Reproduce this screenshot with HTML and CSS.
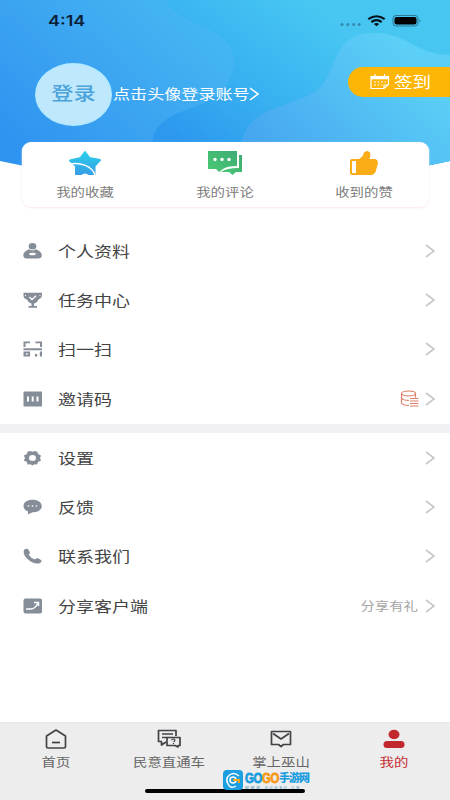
FILE: index.html
```html
<!DOCTYPE html>
<html lang="zh-CN">
<head>
<meta charset="utf-8">
<title>我的</title>
<link rel="stylesheet" href="styles.css">
</head>
<body>
<div class="app">
  <header class="hero">
    <svg class="hero-bg" viewBox="0 0 450 180" width="450" height="180">
      <defs>
        <linearGradient id="sky" gradientUnits="userSpaceOnUse" x1="40" y1="170" x2="190" y2="0"><stop offset="0" stop-color="#2f93f0"/><stop offset=".5" stop-color="#3ca5f1"/><stop offset="1" stop-color="#45b8f2"/></linearGradient>
        <linearGradient id="band" gradientUnits="userSpaceOnUse" x1="190" y1="150" x2="300" y2="0"><stop offset="0" stop-color="#2c98ee"/><stop offset=".5" stop-color="#39b2f1"/><stop offset="1" stop-color="#47c6f2"/></linearGradient>
        <linearGradient id="wave" gradientUnits="userSpaceOnUse" x1="270" y1="160" x2="390" y2="40"><stop offset="0" stop-color="#46a6f0"/><stop offset="1" stop-color="#5bcff6"/></linearGradient>
        <clipPath id="edge"><path d="M0 0H450V161Q225 211 0 161Z"/></clipPath>
      </defs>
      <g clip-path="url(#edge)">
        <path fill="url(#sky)" d="M0 0H450V180H0Z"/>
        <path fill="url(#band)" d="M165 0C175 20 199 22 215 33C232 43 237 58 232 72C226 89 220 96 204 103C184 112 154 116 152 144V180H450V0Z"/>
        <path fill="url(#wave)" d="M240 150C244 115 270 110 295 101C316 93 323 89 332 67C341 43 350 34 370 33C406 31 414 54 450 55V180H240Z"/>
      </g>
    </svg>
    <div class="status">
      <span class="time">4:14</span>
      <svg class="signals" width="84" height="16" viewBox="0 0 84 16">
        <g fill="#3489af"><circle cx="3" cy="12.500" r="1.500"/><circle cx="8.800" cy="12.500" r="1.500"/><circle cx="14.600" cy="12.500" r="1.500"/><circle cx="20.200" cy="12.500" r="1.500"/></g>
        <g fill="none" stroke="#06131c" stroke-width="2.200"><path d="M29.300 7.200Q37.500 1.300 45.700 7.200"/><path d="M32.300 10Q37.500 6.300 42.700 10"/></g><path fill="#06131c" d="M34.800 12Q37.500 10.200 40.200 12L37.500 14.300Z"/>
        <rect x="54" y="3.500" width="25" height="10.500" rx="3" fill="none" stroke="#2c7796"/><rect x="55.500" y="5" width="22" height="7.500" rx="2"/><path fill="#2c7796" d="M80.500 7Q82.500 8.500 80.500 10.500Z"/>
      </svg>
    </div>
    <div class="profile">
      <div class="avatar"><span class="wide">登录</span></div>
      <div class="hint"><span class="wide">点击头像登录账号</span></div>
      <svg class="hint-arrow" width="10" height="14" viewBox="0 0 10 14"><path d="M1 1L9 7L1 13" fill="none" stroke="#fff" stroke-width="1.500"/></svg>
      <div class="sign">
        <svg width="20" height="16" viewBox="0 0 20 16" fill="none" stroke="#fff" stroke-width="1.200"><path d="M1 2.500H18.500V10.500L14 14.500H1Z"/><path d="M1 4H18.500" stroke-width="2.600"/><path d="M5 0V3M14.500 0V3"/><path d="M4 8H16M4 11H12" stroke-dasharray="2 1.500"/><path d="M14 14V11H18"/></svg>
        <span class="wide">签到</span>
      </div>
    </div>
    <div class="card">
      <div class="stat">
        <svg width="34" height="26" viewBox="0 0 34 26"><defs><linearGradient id="st" gradientUnits="userSpaceOnUse" x1="0" y1="0" x2="0" y2="26"><stop offset="0" stop-color="#29d3e9"/><stop offset="1" stop-color="#389be8"/></linearGradient></defs><path fill="url(#st)" stroke="url(#st)" stroke-width="2" stroke-linejoin="round" d="M17 2L21.500 8L32 10L26.500 16V24H8V16L2 10.500L12.500 8Z"/><path d="M1 14C13 12 24 16 27 25" fill="none" stroke="#fff" stroke-width="1.500"/><path d="M12 26Q17 21 22 26Z" fill="#fff"/></svg>
        <span class="wide">我的收藏</span>
      </div>
      <div class="stat">
        <svg width="36" height="26" viewBox="0 0 36 26"><defs><linearGradient id="cm" x1="0" y1="1" x2="1" y2="0"><stop offset="0" stop-color="#4bca75"/><stop offset="1" stop-color="#3dac74"/></linearGradient></defs><g fill="url(#cm)"><path d="M1 1H30V16Q20 16 16 19L12 22L9 19H1Z"/><path d="M32 5H35V22H29L25.500 25L22 22H14Q19 18 32 18Z"/></g><g fill="#fff"><circle cx="8" cy="9.500" r="1.700"/><circle cx="15" cy="9.500" r="1.700"/><circle cx="22" cy="9.500" r="1.700"/></g></svg>
        <span class="wide">我的评论</span>
      </div>
      <div class="stat">
        <svg width="30" height="26" viewBox="0 0 30 26"><path fill="#fbad18" d="M3 9H10Q14 7 15 2.500Q18-.5 21 2.500Q22 5 20.500 9H26Q29.500 10 28.800 14L26.500 22Q25 25 22 25H3Q1 25 1 23V11Q1 9 3 9Z"/><path fill="#fff" d="M3 11H7V23H3Z"/></svg>
        <span class="wide">收到的赞</span>
      </div>
    </div>
  </header>

  <main>
    <ul class="menu">
      <li><svg class="ico" viewBox="0 0 20 16"><ellipse cx="9.500" cy="3.300" rx="3.800" ry="3.200"/><path d="M6 6.300Q9.500 8.500 13 6.300Q18.800 9 18.800 12Q18.800 15.500 15 15.500H4Q.3 15.500 .3 12Q.3 9 6 6.300Z"/><ellipse cx="9.500" cy="11" rx="3.300" ry="1.300" fill="#fff"/></svg><span class="wide">个人资料</span><svg class="chev" viewBox="0 0 10 14"><path d="M1 1L9 7L1 13"/></svg></li>
      <li><svg class="ico" viewBox="0 0 20 16"><path d="M.5 .8H19V4Q18 7 15.500 7.500Q14 11 11 11.500V14H14V15.700H5.500V14H8.500V11.500Q5.500 11 4 7.500Q1 7 .5 4Z"/><path d="M6.500 5L9 7.500L13 3.800" fill="none" stroke="#fff" stroke-width="1.300"/><path d="M2 3.500H3M17.500 3.500H16.500" stroke="#fff" stroke-width="1.200" fill="none"/></svg><span class="wide">任务中心</span><svg class="chev" viewBox="0 0 10 14"><path d="M1 1L9 7L1 13"/></svg></li>
      <li><svg class="ico" viewBox="0 0 20 16"><path d="M.5 .5H7V2.300H2.500V6H.5ZM12.500 .5H19V6H17V2.300H12.500ZM.5 7.300H19V9.200H.5ZM.5 10.500H7V15.500H.5ZM12 13H14.200V15.500H12ZM16.800 10.500H19V15.500H16.800Z"/><path d="M3 12.200H4.700V13.800H3Z" fill="#fff"/></svg><span class="wide">扫一扫</span><svg class="chev" viewBox="0 0 10 14"><path d="M1 1L9 7L1 13"/></svg></li>
      <li><svg class="ico" viewBox="0 0 20 16"><rect x=".5" y=".5" width="18.500" height="15" rx=".7"/><path d="M4 5.500H6V10.500H4ZM8.700 5.500H10.700V10.500H8.700ZM13.500 5.500H15.500V10.500H13.500Z" fill="#fff"/></svg><span class="wide">邀请码</span><svg class="coins" viewBox="0 0 20 18" width="20" height="18"><ellipse cx="8.500" cy="3.500" rx="7" ry="2.500"/><path d="M1.500 3.500V13Q3 15.500 9 15.500M1.500 8Q3 10.500 9 10.500M15.500 3.500V7.500M10 8.500H18.500M10 11H18.500M10 13.500H18.500M10 16H18.500"/></svg><svg class="chev" viewBox="0 0 10 14"><path d="M1 1L9 7L1 13"/></svg></li>
    </ul>
    <div class="gap"></div>
    <ul class="menu">
      <li><svg class="ico" viewBox="0 0 20 16"><path d="M7 1L9.500 1.700L12 1L14.500 2L15 4L18 5.500L17 8L18 10.500L15 12L14 14.500L11.500 14.300L9.500 15.500L7.500 14.300L4.500 14.500L4 12L.8 10.500L2 8L.8 5.500L4 4L4.500 1.800Z"/><ellipse cx="9.500" cy="8" rx="3.500" ry="3" fill="#fff"/></svg><span class="wide">设置</span><svg class="chev" viewBox="0 0 10 14"><path d="M1 1L9 7L1 13"/></svg></li>
      <li><svg class="ico" viewBox="0 0 20 16"><path d="M9.500 .7C14.500 .7 18.800 3 18.800 7S14.500 13.300 9.500 13.300L5 15.500V12.500Q.5 11 .5 7C.5 3 4.500 .7 9.500 .7Z"/><g fill="#dce0e5"><circle cx="5.500" cy="7" r=".9"/><circle cx="9.500" cy="7" r=".9"/><circle cx="13.500" cy="7" r=".9"/></g></svg><span class="wide">反馈</span><svg class="chev" viewBox="0 0 10 14"><path d="M1 1L9 7L1 13"/></svg></li>
      <li><svg class="ico" viewBox="0 0 20 16"><path d="M1 2Q3 0 5 1L7 4.500Q7 6 5.500 6.500Q7.500 10 12 11.500L14 10Q16 10 18.500 12.500Q19 14 16.500 15.200Q11 16.500 5 11.500Q-.5 6.500 1 2Z"/></svg><span class="wide">联系我们</span><svg class="chev" viewBox="0 0 10 14"><path d="M1 1L9 7L1 13"/></svg></li>
      <li><svg class="ico" viewBox="0 0 20 16"><rect x=".5" y=".5" width="18.500" height="15" rx="2"/><path d="M3 11H8Q12 11 15 5M11 4.500H15.500V8" fill="none" stroke="#fff" stroke-width="1.500"/></svg><span class="wide">分享客户端</span><span class="note">分享有礼</span><svg class="chev" viewBox="0 0 10 14"><path d="M1 1L9 7L1 13"/></svg></li>
    </ul>
  </main>

  <nav class="tabs">
    <div class="tab"><svg width="24" height="22" viewBox="0 0 24 22"><path d="M12 2L21.500 8V18.500Q21.500 20 20 20H4Q2.500 20 2.500 18.500V8Z"/><path d="M8 14.500H16"/></svg><span class="wide">首页</span></div>
    <div class="tab"><svg width="26" height="22" viewBox="0 0 26 22"><path d="M10 14L5.500 17V13.500H2.500V2.500H20V8M6 6H17M6 9.500H11"/><path d="M11 9.500H24V17.500H22V19L19 17.500H11Z"/><path d="M15.500 12Q17.500 10 19 12Q19 13 17.500 14M17.500 15V16" stroke-width="1.200"/></svg><span class="wide">民意直通车</span></div>
    <div class="tab"><svg width="24" height="22" viewBox="0 0 24 22"><path d="M2.500 3.500H21.500V16.500H14.500L12 18.500L9.500 16.500H2.500Z"/><path d="M4 5.500L12 11L20 5.500"/></svg><span class="wide">掌上巫山</span></div>
    <div class="tab active"><svg width="24" height="22" viewBox="0 0 24 22"><ellipse cx="12" cy="6.500" rx="5.500" ry="4.700"/><rect x="1.500" y="13" width="21" height="7" rx="3.500"/></svg><span class="wide">我的</span></div>
    <div class="home-bar"></div>
    <div class="mark">
      <svg width="20" height="20" viewBox="0 0 20 20"><rect width="20" height="20" rx="4" fill="#1b9fe0"/><path d="M16 6Q11 1.500 6.500 5T5 14T13 16" fill="none" stroke="#fff" stroke-width="1.500"/><circle cx="10" cy="10" r="3" fill="none" stroke="#fff" stroke-width="1.500"/><path d="M10 10H16V13" fill="none" stroke="#f7a51b" stroke-width="2"/></svg>
      <div class="mark-text"><div class="mark-name"><b>GO</b><b class="or">GO</b><i>手游网</i></div><div class="mark-url">WWW.GOGSO.CN</div></div>
    </div>
  </nav>
</div>
</body>
</html>
```
FILE: styles.css
```css
* { box-sizing: border-box; }
body { margin: 0; font-family: "Liberation Sans", "Noto Sans CJK SC", sans-serif; background: #fff; }
svg { display: block; flex: none; }
.app { width: 450px; height: 800px; display: flex; flex-direction: column; overflow: hidden; }
.wide { display: inline-block; transform: scaleX(1.2); transform-origin: center; white-space: nowrap; }

.hero { position: relative; height: 226px; flex: none; }
.hero-bg { position: absolute; left: 0; top: 0; }
.status { position: relative; height: 42px; padding: 0 30px 0 48px; display: flex; align-items: center; justify-content: space-between; }
.time { font: 600 15px/42px Inter, sans-serif; color: #0b2038; transform: scaleX(1.2); transform-origin: left; }
.signals { margin-top: -2px; margin-right: -3px; }
.profile { position: relative; height: 100px; display: flex; padding: 21px 0 0 35px; }
.avatar { width: 77px; height: 63px; border-radius: 50%; border: 2px solid #b5e9ff; background: #bfe8fd; color: #4ba3d9; font-size: 18.500px; font-weight: 500; line-height: 26px; padding-bottom: 2px; display: flex; align-items: center; justify-content: center; }
.hint { width: 137px; margin-left: 1px; line-height: 63px; font-size: 14px; color: #fff; }
.hint .wide { transform: scaleX(1.22); transform-origin: left; }
.hint-arrow { margin-top: 24px; margin-left: -1px; }
.sign { margin: 4px 0 0 auto; width: 102px; height: 30px; border-radius: 15px 0 0 15px; background: #fdb605; color: #fff; display: flex; align-items: center; padding-left: 22px; gap: 4px; font-size: 15.500px; line-height: 28px; }
.sign .wide { transform-origin: left; margin-top: 1px; }
.card { position: relative; margin: 0 21px 0 22px; height: 65px; display: flex; border-radius: 9px; background: #fff; box-shadow: 0 1px 2px #fbe9e9; }
.stat { position: relative; flex: 1; display: flex; flex-direction: column; align-items: center; padding-top: 8px; font-size: 12px; line-height: 18px; color: #7c7c7c; gap: 8px; }
.stat:first-child { margin-left: -7px; }
.stat:last-child { margin-right: -5px; }

.menu { list-style: none; margin: 0; padding: 0 15px 0 23px; height: 198px; display: grid; grid-template-rows: repeat(4, 49.300px); }
.menu li { display: flex; align-items: center; font-size: 15px; color: #444; }
.ico { width: 20px; height: 16px; fill: #858d98; margin-right: 15px; }
.menu .wide { transform-origin: left; margin-right: auto; margin-top: -1px; }
.chev { width: 10px; height: 14px; fill: none; stroke: #c6c6cb; stroke-width: 1.600; }
.coins { margin-right: 5px; fill: none; stroke: #df806a; stroke-width: 1.200; }
.note { font-size: 12px; color: #a5a5a5; transform: scaleX(1.200); transform-origin: right; margin-right: 7px; }
.gap { height: 9px; background: #f0f0f5; }

.tabs { position: relative; margin-top: auto; height: 78px; flex: none; background: #ededed; border-top: 1px solid #e8e8e8; display: grid; grid-template-columns: repeat(4, 1fr); }
.tab { display: flex; flex-direction: column; align-items: center; padding-top: 5px; font-size: 12px; line-height: 18px; color: #666; gap: 4px; }
.tab svg { fill: none; stroke: #424247; stroke-width: 1.700; stroke-linejoin: round; }
.tab.active { color: #c62b30; }
.tab.active svg { fill: #c1272d; stroke: none; }
.home-bar { position: absolute; left: 145px; top: 66px; width: 160px; height: 4px; border-radius: 2px; background: #000; }
.mark { position: absolute; left: 223px; top: 47px; display: flex; gap: 2px; }
.mark-text { width: 66px; }
.mark-name { display: flex; height: 15px; line-height: 16px; font-size: 15px; letter-spacing: -.5px; color: #199be0; }
.mark-name b { font-family: "Liberation Sans"; width: 17px; transform: scaleX(.76); transform-origin: left; -webkit-text-stroke: .8px; }
.mark-name .or { color: #f79a19; }
.mark-name i { font-style: normal; font-weight: 900; font-size: 11px; letter-spacing: -1px; white-space: nowrap; }
.mark-url { font-size: 4px; line-height: 5px; letter-spacing: 1.800px; color: #2b86bb; white-space: nowrap; }
```
